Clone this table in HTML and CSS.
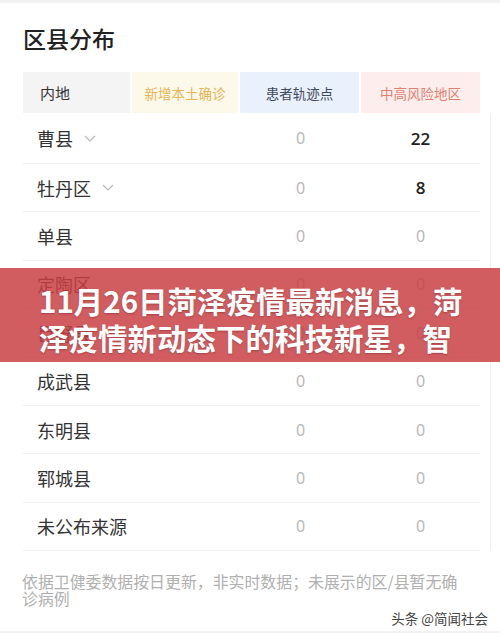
FILE: index.html
```html
<!DOCTYPE html>
<html lang="zh-CN">
<head>
<meta charset="utf-8">
<link rel="stylesheet" href="styles.css">
</head>
<body>
<div class="page">
  <div class="top-strip"></div>
  <h1 class="title">区县分布</h1>
  <div class="table">
    <div class="head">
      <div class="hcell h-area">内地</div>
      <div class="hcell h-new">新增本土确诊</div>
      <div class="hcell h-track">患者轨迹点</div>
      <div class="hcell h-risk">中高风险地区</div>
    </div>
    <div class="rows">
      <div class="row row-first">
        <div class="name">曹县<svg class="chev" viewBox="0 0 12 7" width="12" height="7"><polyline points="1,1 6,6 11,1"/></svg></div>
        <div></div><div class="num">0</div><div class="num strong">22</div>
      </div>
      <div class="row">
        <div class="name">牡丹区<svg class="chev" viewBox="0 0 12 7" width="12" height="7"><polyline points="1,1 6,6 11,1"/></svg></div>
        <div></div><div class="num">0</div><div class="num strong">8</div>
      </div>
      <div class="row"><div class="name">单县</div><div></div><div class="num">0</div><div class="num">0</div></div>
      <div class="row"><div class="name">定陶区</div><div></div><div class="num">0</div><div class="num">0</div></div>
      <div class="row"><div class="name">巨野县</div><div></div><div class="num">0</div><div class="num">0</div></div>
      <div class="row"><div class="name">成武县</div><div></div><div class="num">0</div><div class="num">0</div></div>
      <div class="row"><div class="name">东明县</div><div></div><div class="num">0</div><div class="num">0</div></div>
      <div class="row"><div class="name">郓城县</div><div></div><div class="num">0</div><div class="num">0</div></div>
      <div class="row"><div class="name">未公布来源</div><div></div><div class="num">0</div><div class="num">0</div></div>
    </div>
  </div>
  <p class="note">依据卫健委数据按日更新，非实时数据；未展示的区/县暂无确诊病例</p>
  <div class="mark">头条 @简闻社会</div>
  <div class="bottom-strip"></div>
  <div class="banner">
    <div class="banner-line">11月26日菏泽疫情最新消息，菏</div>
    <div class="banner-line">泽疫情新动态下的科技新星，智</div>
  </div>
</div>
</body>
</html>
```

FILE: styles.css
```css
html, body {
  margin: 0;
  padding: 0;
  background: #ffffff;
}
body {
  font-family: "Noto Sans CJK SC", "Noto Sans", sans-serif;
  color: #333;
}
.page {
  position: relative;
  width: 500px;
  height: 633px;
  overflow: hidden;
}
.top-strip {
  height: 3px;
  background: #f2f2f2;
}
.title {
  margin: 21px 0 0 23px;
  font-size: 23px;
  line-height: 28px;
  font-weight: 500;
  color: #222;
  height: 28px;
}
.table {
  margin: 20px 0 0 23px;
  width: 457px;
}
.head {
  display: grid;
  grid-template-columns: 107px 106px 119px 119px;
  column-gap: 2px;
  width: 457px;
  height: 41px;
}
.hcell {
  display: flex;
  align-items: center;
  justify-content: center;
  font-size: 13.5px;
}
.h-area {
  background: #f4f4f5;
  justify-content: flex-start;
  padding-left: 17px;
  font-size: 15px;
  color: #333;
}
.h-new {
  background: #fdf9ea;
  color: #e5b556;
}
.h-track {
  background: #e9f1fc;
  color: #3e4a5c;
}
.h-risk {
  background: #fdeeed;
  color: #e2806f;
}
.rows {
  width: 457px;
  padding-right: 10px;
  border-right: 1px solid #f0f0f0;
}
.row {
  display: grid;
  grid-template-columns: 109px 108px 121px 119px;
  align-items: center;
  height: 48.4px;
  box-sizing: border-box;
  border-bottom: 1px solid #f0f0f0;
}
.row-first {
  height: 51px;
}
.name {
  display: flex;
  align-items: center;
  padding-left: 14px;
  font-size: 18px;
  color: #333;
  white-space: nowrap;
}
.chev {
  margin-left: 11px;
  fill: none;
  stroke: #b8b8b8;
  stroke-width: 1.2;
}
.num {
  text-align: center;
  font-family: "Open Sans", "Noto Sans", sans-serif;
  font-size: 16px;
  color: #b5b5b5;
}
.strong {
  font-size: 17px;
  font-weight: 600;
  color: #222;
}
.note {
  margin: 22px 30px 0 22px;
  font-size: 15.9px;
  line-height: 17px;
  color: #b0b0b0;
}
.mark {
  margin-top: 2px;
  text-align: right;
  padding-right: 12px;
  font-size: 13.5px;
  line-height: 18px;
  color: #444;
}
.bottom-strip {
  margin-top: 4px;
  height: 3px;
  background: #f2f2f2;
}
.banner {
  position: absolute;
  left: 0;
  right: 0;
  top: 268px;
  height: 94px;
  box-sizing: border-box;
  padding: 14px 0 0 39px;
  background: rgba(200, 62, 66, 0.84);
  overflow: hidden;
}
.banner-line {
  font-size: 29.5px;
  line-height: 37px;
  font-weight: 700;
  color: #ffffff;
  white-space: nowrap;
  text-shadow: 0 1px 2px rgba(90, 20, 20, 0.35);
}
```
